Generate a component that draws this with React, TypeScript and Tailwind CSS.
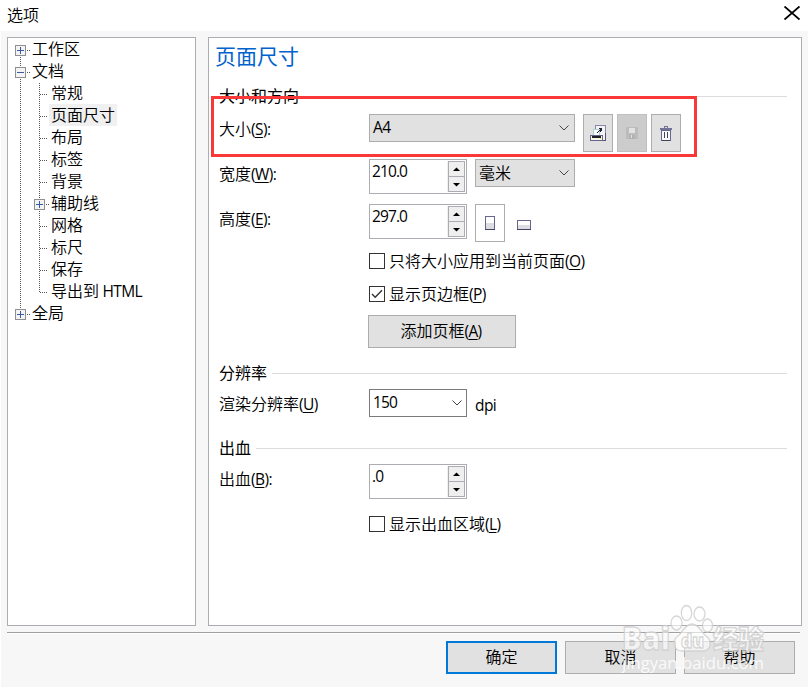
import React from 'react';
import clsx from 'clsx';

type TreeItem = { label: string; latin?: string; level: 0 | 1; box?: 'plus' | 'minus'; last?: boolean; selected?: boolean };

const items: TreeItem[] = [
  { label: '工作区', level: 0, box: 'plus' },
  { label: '文档', level: 0, box: 'minus' },
  { label: '常规', level: 1 },
  { label: '页面尺寸', level: 1, selected: true },
  { label: '布局', level: 1 },
  { label: '标签', level: 1 },
  { label: '背景', level: 1 },
  { label: '辅助线', level: 1, box: 'plus' },
  { label: '网格', level: 1 },
  { label: '标尺', level: 1 },
  { label: '保存', level: 1 },
  { label: '导出到', latin: 'HTML', level: 1, last: true },
  { label: '全局', level: 0, box: 'plus', last: true },
];

const Latin: React.FC<{ children: React.ReactNode }> = ({ children }) => (
  <span className="text-[15.5px] leading-none font-normal tracking-[-0.6px]">{children}</span>
);

const Value: React.FC<{ children: React.ReactNode }> = ({ children }) => (
  <span className="text-[15.5px] leading-none font-normal tracking-[-0.9px]">{children}</span>
);

const Label: React.FC<{ text: string; hotkey: string; colon?: boolean }> = ({ text, hotkey, colon }) => (
  <span className="whitespace-nowrap">
    {text}
    <Latin>
      (<span className="underline decoration-1 underline-offset-2">{hotkey}</span>){colon && ':'}
    </Latin>
  </span>
);

const Guides: React.FC<{ item: TreeItem; first: boolean }> = ({ item, first }) => {
  const x = item.level === 0 ? 0 : 19;
  const dots = { stroke: '#555', strokeDasharray: '1 1' };
  return (
    <svg className={item.level === 0 ? 'w-[17px]' : 'w-9'} height="22" shapeRendering="crispEdges">
      {item.level === 1 && <line x1="5.5" x2="5.5" y1="0" y2="22" {...dots} />}
      <line x1={x + 5.5} x2={x + 5.5} y1={first ? 12 : 0} y2={item.last ? 11 : 22} {...dots} />
      <line x1={x + 6} x2={item.level === 0 ? 16 : item.box ? x + 16 : x + 14} y1="11.5" y2="11.5" {...dots} />
      {item.box && (
        <>
          <rect x={x + 0.5} y="6.5" width="10" height="10" fill="#f3f3f3" stroke="#8f8f8f" />
          <path d={`M${x + 2} 11.5h7`} stroke="#3a5aa8" />
          {item.box === 'plus' && <path d={`M${x + 5.5} 8v7`} stroke="#3a5aa8" />}
        </>
      )}
    </svg>
  );
};

const Tree: React.FC = () => (
  <div className="w-[189px] h-[589px] bg-white border border-[#abadb3] pl-[7px] pt-px">
    {items.map((item, i) => (
      <div key={item.label} className="flex h-[22px]">
        <Guides item={item} first={i === 0} />
        <span
          className={clsx(
            'h-[22px] -mt-px leading-[22px] whitespace-nowrap',
            item.selected && 'bg-[#f0f0f0] -ml-0.5 pl-0.5 pr-0.5',
          )}
        >
          {item.label}
          {item.latin && <Latin> {item.latin}</Latin>}
        </span>
      </div>
    ))}
  </div>
);

const Chevron: React.FC = () => (
  <svg width="10" height="6" className="shrink-0" fill="none" stroke="#444">
    <path d="M0.5 0.5L5 5L9.5 0.5" />
  </svg>
);

const Combo: React.FC<{ className: string; children: React.ReactNode }> = ({ className, children }) => (
  <div className={clsx('h-7 flex items-center justify-between border pl-[3px]', className)}>
    {children}
    <Chevron />
  </div>
);

const Spinner: React.FC<{ value: string }> = ({ value }) => (
  <div className="w-[98px] h-[35px] flex justify-between border border-[#abadb3] bg-white p-px">
    <span className="leading-[21px] pl-px">
      <Value>{value}</Value>
    </span>
    <div className="w-[18px] bg-[#f0f0f0] pl-px">
      {['M4 9h7L7.5 5.5z', 'M4 6h7L7.5 9.5z'].map((d) => (
        <div key={d} className="w-[17px] h-4 bg-[#efefef] border border-[#abadb3] last:-mt-px">
          <svg width="15" height="14">
            <path d={d} fill="#000" />
          </svg>
        </div>
      ))}
    </div>
  </div>
);

const Checkbox: React.FC<{ checked?: boolean; text: string; hotkey: string }> = ({ checked, text, hotkey }) => (
  <div className="flex items-center h-4 gap-1">
    <div className="size-4 border border-[#333] bg-white">
      {checked && (
        <svg width="14" height="14" fill="none" stroke="#333" strokeWidth="1.4">
          <path d="M2 7L5.2 10.2L12 3.2" />
        </svg>
      )}
    </div>
    <Label text={text} hotkey={hotkey} />
  </div>
);

const Heading: React.FC<{ children: React.ReactNode }> = ({ children }) => (
  <div className="flex items-center gap-[5px] h-6 pr-3.5">
    <span className="font-normal">{children}</span>
    <span className="flex-1 h-px bg-[#dcdcdc]" />
  </div>
);

const Row: React.FC<{ label?: React.ReactNode; className: string; children: React.ReactNode }> = ({
  label,
  className,
  children,
}) => (
  <div className={clsx('flex items-start', className)}>
    <div className="w-[150px] shrink-0 pt-[3px] leading-6">{label}</div>
    {children}
  </div>
);

const ExportIcon: React.FC = () => (
  <svg width="16" height="16" shapeRendering="crispEdges">
    <path d="M5.5 0.5h10v15h-10z" fill="#f4f4f8" stroke="#8888a8" />
    <path d="M15 8h1v8h-4v-1h3z" fill="#55556f" />
    <path d="M3.5 4.5h6v7h-6z" fill="#fff" stroke="#b0d4cf" />
    <path d="M9 3h3v3h-1v1h-1v-1h-1v1h-1v1h-1v-1h1v-1h1v-1h1v-1h-1z" fill="#222230" />
    <path d="M0.5 10.5h12v5h-12z" fill="#f8f8e8" stroke="#66668c" />
    <path d="M2 11h9v2h-9z" fill="#20202a" />
    <path d="M10 13h1v1h-1z" fill="#f4de32" />
  </svg>
);

const SaveIcon: React.FC = () => (
  <svg width="12" height="12" shapeRendering="crispEdges">
    <path d="M0 0h11l1 1v11h-12z" fill="#bcbcbc" />
    <path d="M3 1h6v5h-6z" fill="#e2e2e2" />
    <path d="M3 8h6v4h-6z" fill="#b2b2b2" />
    <path d="M5 8h1v3h-1z" fill="#e2e2e2" />
  </svg>
);

const TrashIcon: React.FC = () => (
  <svg width="12" height="15" shapeRendering="crispEdges">
    <path d="M1.5 4.5h9v10h-9z" fill="#fafafa" stroke="#66668c" />
    <path d="M0 2h12v2h-12z" fill="#73739a" />
    <path d="M4 0h4v2h-1v-1h-2v1h-1z" fill="#73739a" />
    <path d="M4 6h1v6h-1zM7 6h1v6h-1zM2 14h8v1h-8z" fill="#44445f" />
  </svg>
);

const PageIcon: React.FC<{ w: number; h: number }> = ({ w, h }) => (
  <svg width={w} height={h} shapeRendering="crispEdges">
    <rect x="0.5" y="0.5" width={w - 1} height={h - 1} fill="#fff" stroke="#66668c" />
    <rect x="1" y={h / 2} width={w - 2} height={h / 2 - 1} fill="#dcdce2" />
    <path d={`M0 ${h - 0.5}h${w}`} stroke="#44445f" />
  </svg>
);

const toolButton = 'w-[30px] h-[38px] flex items-center justify-center border';

const PageSize: React.FC = () => (
  <div className="w-[594px] h-[589px] bg-white border border-[#abadb3] pl-2.5">
    <h1 className="-ml-1 h-[38px] leading-[37px] text-[21px] font-normal text-[#0062cc]">页面尺寸</h1>
    <div className="pt-2">
      <Heading>大小和方向</Heading>
    </div>
    <Row label={<Label text="大小" hotkey="S" colon />} className="h-[45px] mt-1.5">
      <Combo className="w-[206px] pr-[5px] bg-[#e1e1e1] border-[#adadad]">
        <Latin>A4</Latin>
      </Combo>
      <div className="flex gap-1 ml-2">
        <div className={clsx(toolButton, 'bg-[#e1e1e1] border-[#adadad]')}><ExportIcon /></div>
        <div className={clsx(toolButton, 'bg-[#cccccc] border-[#bfbfbf]')}><SaveIcon /></div>
        <div className={clsx(toolButton, 'bg-[#e1e1e1] border-[#adadad]')}><TrashIcon /></div>
      </div>
    </Row>
    <Row label={<Label text="宽度" hotkey="W" colon />} className="h-[45px]">
      <Spinner value="210.0" />
      <Combo className="w-[100px] pr-[5px] ml-2 bg-[#e1e1e1] border-[#adadad]">毫米</Combo>
    </Row>
    <Row label={<Label text="高度" hotkey="E" colon />} className="h-[49px]">
      <Spinner value="297.0" />
      <div className={clsx(toolButton, 'ml-2 bg-white border-[#adadad]')}><PageIcon w={10} h={14} /></div>
      <div className="ml-3 mt-4"><PageIcon w={14} h={10} /></div>
    </Row>
    <Row className="h-[33px]">
      <Checkbox text="只将大小应用到当前页面" hotkey="O" />
    </Row>
    <Row className="h-[29px]">
      <Checkbox checked text="显示页边框" hotkey="P" />
    </Row>
    <Row className="h-[46px]">
      <button className="w-[148px] h-[33px] pb-0.5 pr-0.5 -ml-px bg-[#e1e1e1] border border-[#adadad]">
        <Label text="添加页框" hotkey="A" />
      </button>
    </Row>
    <Heading>分辨率</Heading>
    <Row label={<Label text="渲染分辨率" hotkey="U" />} className="h-[47px] mt-1">
      <Combo className="w-[98px] pr-1 bg-white border-[#7a7a7a]">
        <Value>150</Value>
      </Combo>
      <span className="ml-2 pt-1"><Latin>dpi</Latin></span>
    </Row>
    <Heading>出血</Heading>
    <Row label={<Label text="出血" hotkey="B" colon />} className="h-[52px] mt-1">
      <Spinner value=".0" />
    </Row>
    <Row className="h-4">
      <Checkbox text="显示出血区域" hotkey="L" />
    </Row>
  </div>
);

const Watermark: React.FC = () => (
  <svg
    className="absolute left-[616px] top-[600px] pointer-events-none"
    width="156"
    height="80"
    fill="#ffffff"
    fillOpacity="0.6"
    stroke="#cccccc"
    strokeOpacity="0.8"
    strokeWidth="1.3"
    fontFamily='"Open Sans", "Noto Sans CJK SC", sans-serif'
  >
    <ellipse cx="60.5" cy="23" rx="5.5" ry="7" />
    <ellipse cx="70.5" cy="13" rx="5.2" ry="7.5" />
    <ellipse cx="83.5" cy="14" rx="5.5" ry="7" />
    <ellipse cx="91.5" cy="25.5" rx="5" ry="6.5" />
    <path d="M76 24C69 24 67 32 62 36C56 40 57 51 66 51C71 51 81 51 86 51C96 51 96 40 90 36C85 32 83 24 76 24z" />
    <text x="6" y="50" fontSize="32" fontWeight="800" textLength="48" lengthAdjust="spacingAndGlyphs">Bai</text>
    <text x="65" y="48" fontSize="19" fontWeight="800" textLength="23" lengthAdjust="spacingAndGlyphs" fillOpacity="0.8">du</text>
    <text x="97" y="49" fontSize="26" fontWeight="900" textLength="51" lengthAdjust="spacingAndGlyphs">经验</text>
    <text x="6" y="69" fontSize="16" fontWeight="500" stroke="none" fillOpacity="0.85" textLength="142" lengthAdjust="spacingAndGlyphs">jingyan.baidu.com</text>
  </svg>
);

const App: React.FC = () => (
  <div className="relative w-[811px] h-[692px] bg-white text-black text-base leading-6 font-[350] font-['Open_Sans','Noto_Sans_CJK_SC',sans-serif]">
    <div className="flex justify-between h-[31px] pl-[7px] pr-[11px]">
      <span className="leading-[31px]">选项</span>
      <svg width="16" height="14" className="mt-1.5" stroke="#000" strokeWidth="1.8">
        <path d="M0.5 0.5L15.5 13.5M15.5 0.5L0.5 13.5" />
      </svg>
    </div>
    <div className="w-[807px] h-[656px] ml-px pt-1.5 pl-1.5 bg-[#f7f7f7]">
      <div className="flex gap-3">
        <Tree />
        <PageSize />
      </div>
      <div className="w-[793px] h-0.5 mt-1.5 border-t border-[#a0a0a0] bg-white" />
      <div className="flex justify-end gap-2 pt-[7px] pr-[13px]">
        <button className="w-[111px] h-[33px] pb-0.5 bg-[#e1e1e1] border-2 border-[#0078d7]">确定</button>
        <button className="w-[111px] h-[33px] pb-0.5 bg-[#e1e1e1] border border-[#adadad]">取消</button>
        <button className="w-[111px] h-[33px] pb-0.5 bg-[#e1e1e1] border border-[#adadad]">帮助</button>
      </div>
    </div>
    <div className="absolute left-[211px] top-24 w-[486px] h-[61px] border-3 border-[#fb3838]" />
    <Watermark />
  </div>
);

export default App;
